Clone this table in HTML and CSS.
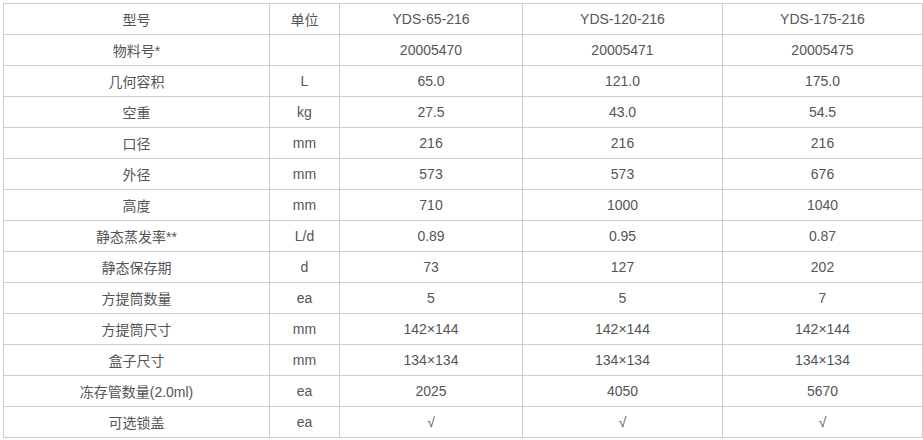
FILE: index.html
```html
<!DOCTYPE html>
<html lang="zh">
<head>
<meta charset="utf-8">
<link rel="stylesheet" href="styles.css">
</head>
<body>
<div class="wrap">
<table class="spec">
<colgroup>
<col class="c1"><col class="c2"><col class="c3"><col class="c4"><col class="c5">
</colgroup>
<tbody>
<tr><td>型号</td><td>单位</td><td>YDS-65-216</td><td>YDS-120-216</td><td>YDS-175-216</td></tr>
<tr><td>物料号*</td><td></td><td>20005470</td><td>20005471</td><td>20005475</td></tr>
<tr><td>几何容积</td><td>L</td><td>65.0</td><td>121.0</td><td>175.0</td></tr>
<tr><td>空重</td><td>kg</td><td>27.5</td><td>43.0</td><td>54.5</td></tr>
<tr><td>口径</td><td>mm</td><td>216</td><td>216</td><td>216</td></tr>
<tr><td>外径</td><td>mm</td><td>573</td><td>573</td><td>676</td></tr>
<tr><td>高度</td><td>mm</td><td>710</td><td>1000</td><td>1040</td></tr>
<tr><td>静态蒸发率**</td><td>L/d</td><td>0.89</td><td>0.95</td><td>0.87</td></tr>
<tr><td>静态保存期</td><td>d</td><td>73</td><td>127</td><td>202</td></tr>
<tr><td>方提筒数量</td><td>ea</td><td>5</td><td>5</td><td>7</td></tr>
<tr><td>方提筒尺寸</td><td>mm</td><td>142×144</td><td>142×144</td><td>142×144</td></tr>
<tr><td>盒子尺寸</td><td>mm</td><td>134×134</td><td>134×134</td><td>134×134</td></tr>
<tr><td>冻存管数量(2.0ml)</td><td>ea</td><td>2025</td><td>4050</td><td>5670</td></tr>
<tr><td>可选锁盖</td><td>ea</td><td>√</td><td>√</td><td>√</td></tr>
</tbody>
</table>
</div>
</body>
</html>
```
FILE: styles.css
```css
html, body {
  margin: 0;
  padding: 0;
  background: #fff;
}
.wrap {
  padding: 3px 0 0 3px;
}
.spec {
  border-collapse: collapse;
  table-layout: fixed;
  width: 920px;
  font-family: "Liberation Sans", Arial, "Noto Sans CJK SC", sans-serif;
  font-size: 14px;
  color: #555;
}
.spec td {
  border: 1px solid #ccc;
  height: 30px;
  padding: 0;
  text-align: center;
  vertical-align: middle;
}
.c1 { width: 266px; }
.c2 { width: 70px; }
.c3 { width: 183px; }
.c4 { width: 200px; }
.c5 { width: 200px; }
```
